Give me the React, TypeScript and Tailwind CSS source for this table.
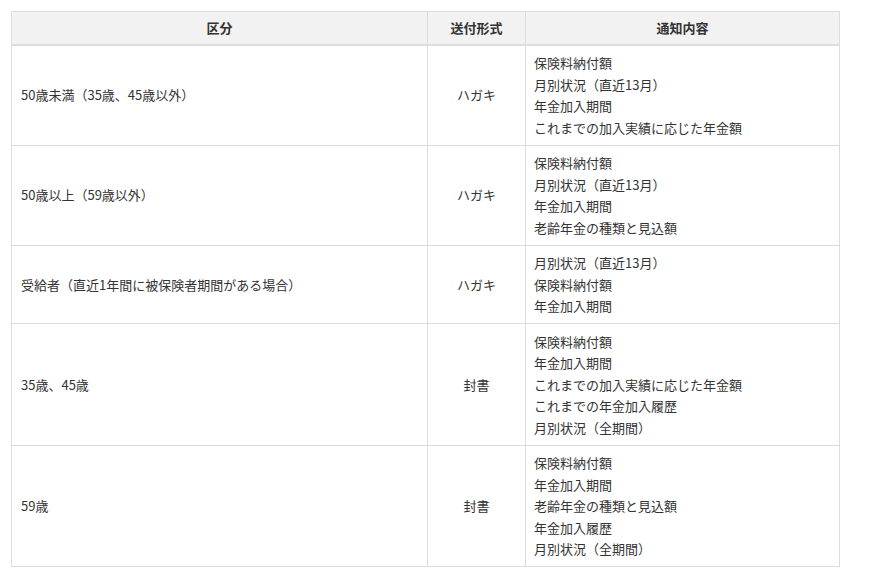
import React from 'react';

type Row = {
  kubun: string;
  keishiki: string;
  naiyou: string[];
};

const rows: Row[] = [
  {
    kubun: '50歳未満（35歳、45歳以外）',
    keishiki: 'ハガキ',
    naiyou: ['保険料納付額', '月別状況（直近13月）', '年金加入期間', 'これまでの加入実績に応じた年金額'],
  },
  {
    kubun: '50歳以上（59歳以外）',
    keishiki: 'ハガキ',
    naiyou: ['保険料納付額', '月別状況（直近13月）', '年金加入期間', '老齢年金の種類と見込額'],
  },
  {
    kubun: '受給者（直近1年間に被保険者期間がある場合）',
    keishiki: 'ハガキ',
    naiyou: ['月別状況（直近13月）', '保険料納付額', '年金加入期間'],
  },
  {
    kubun: '35歳、45歳',
    keishiki: '封書',
    naiyou: ['保険料納付額', '年金加入期間', 'これまでの加入実績に応じた年金額', 'これまでの年金加入履歴', '月別状況（全期間）'],
  },
  {
    kubun: '59歳',
    keishiki: '封書',
    naiyou: ['保険料納付額', '年金加入期間', '老齢年金の種類と見込額', '年金加入履歴', '月別状況（全期間）'],
  },
];

const App: React.FC = () => {
  return (
    <div className="min-h-screen bg-white pt-[11px] pl-[11px] font-['Meiryo','Noto_Sans_CJK_JP',sans-serif] text-[13px] text-[#333]">
      <table className="w-[828px] table-fixed border-collapse">
        <colgroup>
          <col className="w-[416px]" />
          <col className="w-[98px]" />
          <col className="w-[314px]" />
        </colgroup>
        <thead>
          <tr className="h-[33px] bg-[#f2f2f2]">
            <th className="border border-b-2 border-[#dcdcdc] font-bold leading-[22px]">区分</th>
            <th className="border border-b-2 border-[#dcdcdc] font-bold leading-[22px]">送付形式</th>
            <th className="border border-b-2 border-[#dcdcdc] font-bold leading-[22px]">通知内容</th>
          </tr>
        </thead>
        <tbody>
          {rows.map((row) => (
            <tr key={row.kubun}>
              <td className="border border-[#dcdcdc] px-[9px] py-[6.5px] align-middle leading-[21.5px]">{row.kubun}</td>
              <td className="border border-[#dcdcdc] px-[9px] py-[6.5px] text-center align-middle leading-[21.5px]">
                {row.keishiki}
              </td>
              <td className="border border-[#dcdcdc] px-[8px] py-[6.5px] align-middle leading-[21.5px]">
                {row.naiyou.map((line) => (
                  <div key={line}>{line}</div>
                ))}
              </td>
            </tr>
          ))}
        </tbody>
      </table>
    </div>
  );
};

export default App;
